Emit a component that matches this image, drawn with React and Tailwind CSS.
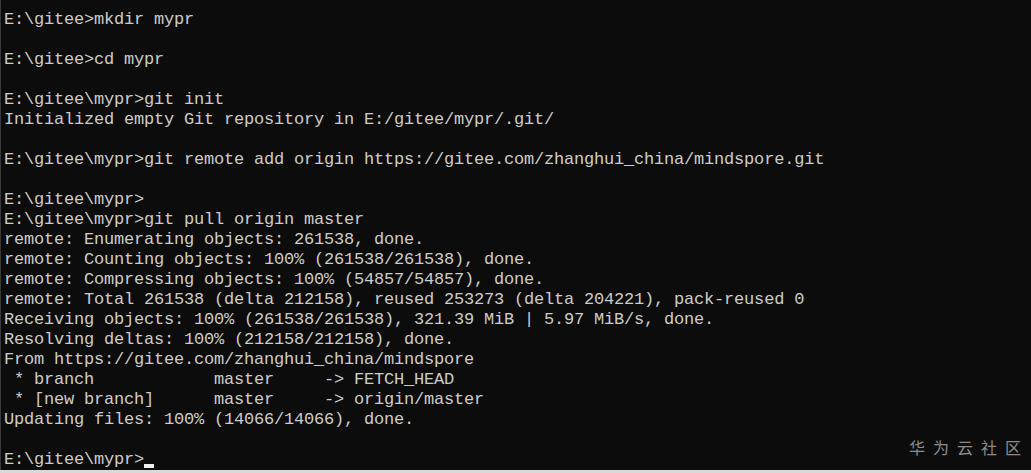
import React from 'react';

const lines = [
  'E:\\gitee>mkdir mypr',
  '',
  'E:\\gitee>cd mypr',
  '',
  'E:\\gitee\\mypr>git init',
  'Initialized empty Git repository in E:/gitee/mypr/.git/',
  '',
  'E:\\gitee\\mypr>git remote add origin https://gitee.com/zhanghui_china/mindspore.git',
  '',
  'E:\\gitee\\mypr>',
  'E:\\gitee\\mypr>git pull origin master',
  'remote: Enumerating objects: 261538, done.',
  'remote: Counting objects: 100% (261538/261538), done.',
  'remote: Compressing objects: 100% (54857/54857), done.',
  'remote: Total 261538 (delta 212158), reused 253273 (delta 204221), pack-reused 0',
  'Receiving objects: 100% (261538/261538), 321.39 MiB | 5.97 MiB/s, done.',
  'Resolving deltas: 100% (212158/212158), done.',
  'From https://gitee.com/zhanghui_china/mindspore',
  ' * branch            master     -> FETCH_HEAD',
  ' * [new branch]      master     -> origin/master',
  'Updating files: 100% (14066/14066), done.',
  '',
];

const App = () => {
  return (
    <div className="w-[1031px] h-[473px] flex flex-col bg-[#d9d9d9] overflow-hidden">
      <div className="relative flex-1 flex border-l border-[#3a3a3a] bg-[#0c0c0c]">
        <div
          className="pt-[10px] pl-[3px] text-[#cccccc] text-[17px] leading-[20px] tracking-[-0.2px] whitespace-pre"
          style={{ fontFamily: '"Liberation Mono", monospace' }}
        >
          {lines.map((line, i) => (
            <div key={i} className="h-[20px]">{line}</div>
          ))}
          <div className="h-[20px] flex items-end">
            <span>E:\gitee\mypr&gt;</span>
            <span className="inline-block w-[10px] h-[4px] mb-[2px] bg-[#f0f0f0]"></span>
          </div>
        </div>
        <div
          className="absolute right-[2px] bottom-[15px] text-[16px] leading-[16px] tracking-[8px] text-[#8c8c8c]"
          style={{ fontFamily: '"Noto Sans CJK SC", sans-serif' }}
        >
          华为云社区
        </div>
      </div>
      <div className="h-[6px]"></div>
    </div>
  );
};

export default App;
